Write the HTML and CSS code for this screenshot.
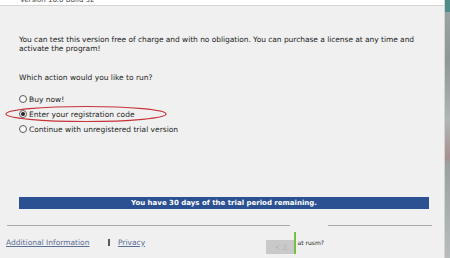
FILE: index.html
```html
<!DOCTYPE html>
<html lang="en">
<head>
    <meta charset="UTF-8">
    <title>Version 16.0 Build 32</title>
    <link rel="stylesheet" href="styles.css">
</head>
<body>
    <div class="screen">
        <div class="dialog">
            <div class="header">
                <span class="header-title">Version 16.0 Build 32</span>
            </div>

            <div class="content">
                <p class="intro">You can test this version free of charge and with no obligation. You can purchase a license at any time and activate the program!</p>

                <p class="question">Which action would you like to run?</p>

                <div class="options">
                    <label class="option"><span class="radio"></span>Buy now!</label>
                    <label class="option marked"><span class="radio checked"></span>Enter your registration code
                        <svg class="circle-mark" width="164" height="18" viewBox="0 0 164 18">
                            <ellipse cx="82" cy="9" rx="80" ry="7.5" fill="none" stroke="#c8323a" stroke-width="1.2"/>
                        </svg>
                    </label>
                    <label class="option"><span class="radio"></span>Continue with unregistered trial version</label>
                </div>

                <div class="trial-bar">You have 30 days of the trial period remaining.</div>
            </div>

            <div class="footer">
                <div class="rule">
                    <span class="rule-left"></span>
                    <span class="rule-right"></span>
                </div>
                <div class="footer-row">
                    <a class="link" href="#">Additional Information</a>
                    <span class="pipe"></span>
                    <a class="link" href="#">Privacy</a>
                    <div class="ghost">
                        <span class="ghost-btn">&lt; 上</span>
                        <span class="ghost-line"></span>
                        <span class="ghost-text">at rusm?</span>
                    </div>
                </div>
            </div>
        </div>
        <div class="side-strip"></div>
    </div>
</body>
</html>
```

FILE: styles.css
```css
:root {
    --panel: #f0f0f0;
    --text: #1e1e1e;
    --bar: #2c5193;
    --link: #5b6e96;
    --rule: #a9a9a9;
}

* {
    margin: 0;
    padding: 0;
    box-sizing: border-box;
}

body {
    font-family: 'DejaVu Sans', Verdana, sans-serif;
    font-size: 7.5px;
    color: var(--text);
    background: var(--panel);
    width: 450px;
    height: 258px;
    overflow: hidden;
}

.screen {
    display: flex;
    height: 258px;
}

.dialog {
    width: 445px;
    display: flex;
    flex-direction: column;
    background: var(--panel);
    border-right: 1px solid #d4d4d4;
}

.header {
    height: 9px;
    background: #ffffff;
    border-bottom: 1px solid #d6d6d6;
    overflow: hidden;
    padding-left: 20px;
}

.header-title {
    display: block;
    margin-top: -4px;
    line-height: 9px;
    font-size: 7px;
    color: #444;
}

.content {
    padding: 29px 0 0 19px;
    position: relative;
}

.intro {
    width: 415px;
    line-height: 9px;
    letter-spacing: -0.05px;
}

.question {
    margin-top: 20px;
    line-height: 10px;
}

.options {
    margin-top: 11px;
    display: flex;
    flex-direction: column;
    gap: 5px;
}

.option {
    display: flex;
    align-items: center;
    gap: 2px;
    height: 10px;
    position: relative;
}

.radio {
    width: 8px;
    height: 8px;
    border: 1px solid #5a5a5a;
    border-radius: 50%;
    background: #fbfbfb;
    display: inline-flex;
    align-items: center;
    justify-content: center;
}

.radio.checked::after {
    content: "";
    width: 4px;
    height: 4px;
    border-radius: 50%;
    background: #222;
}

.circle-mark {
    position: absolute;
    left: -15px;
    top: -4px;
}

.trial-bar {
    margin-top: 63px;
    width: 410px;
    height: 12px;
    background: var(--bar);
    color: #ffffff;
    font-weight: bold;
    font-size: 7px;
    text-align: center;
    line-height: 12px;
}

.footer {
    margin-top: 16px;
}

.rule {
    display: flex;
    height: 1px;
    padding-left: 7px;
}

.rule-left {
    width: 283px;
    background: var(--rule);
}

.rule-right {
    margin-left: 38px;
    width: 104px;
    background: var(--rule);
}

.footer-row {
    display: flex;
    align-items: center;
    padding-left: 6px;
    height: 32px;
}

.link {
    color: var(--link);
    text-decoration: underline;
}

.pipe {
    width: 1.5px;
    height: 7px;
    margin: 0 8px 0 19px;
    background: #5a5a5a;
}

.ghost {
    display: flex;
    align-items: flex-start;
    margin-left: 121px;
    height: 22px;
    margin-top: 2px;
}

.ghost-btn {
    width: 30px;
    height: 14px;
    margin-top: 8px;
    background: #c9c9c9;
    color: #a8a8a8;
    font-size: 6px;
    line-height: 14px;
    text-align: center;
}

.ghost-line {
    width: 1.5px;
    height: 22px;
    margin-left: -2px;
    background: #74c043;
}

.ghost-text {
    margin-top: 7px;
    margin-left: 2px;
    font-size: 6px;
    color: #222;
}

.side-strip {
    width: 5px;
    background: linear-gradient(to bottom, #4d8d8a 0, #4d8d8a 12px, #9aa3a3 12px, #8f9696 60px, #b0b5b5 120px, #a89090 158px, #9aa0a0 164px, #b8bcbc 258px);
}
```
